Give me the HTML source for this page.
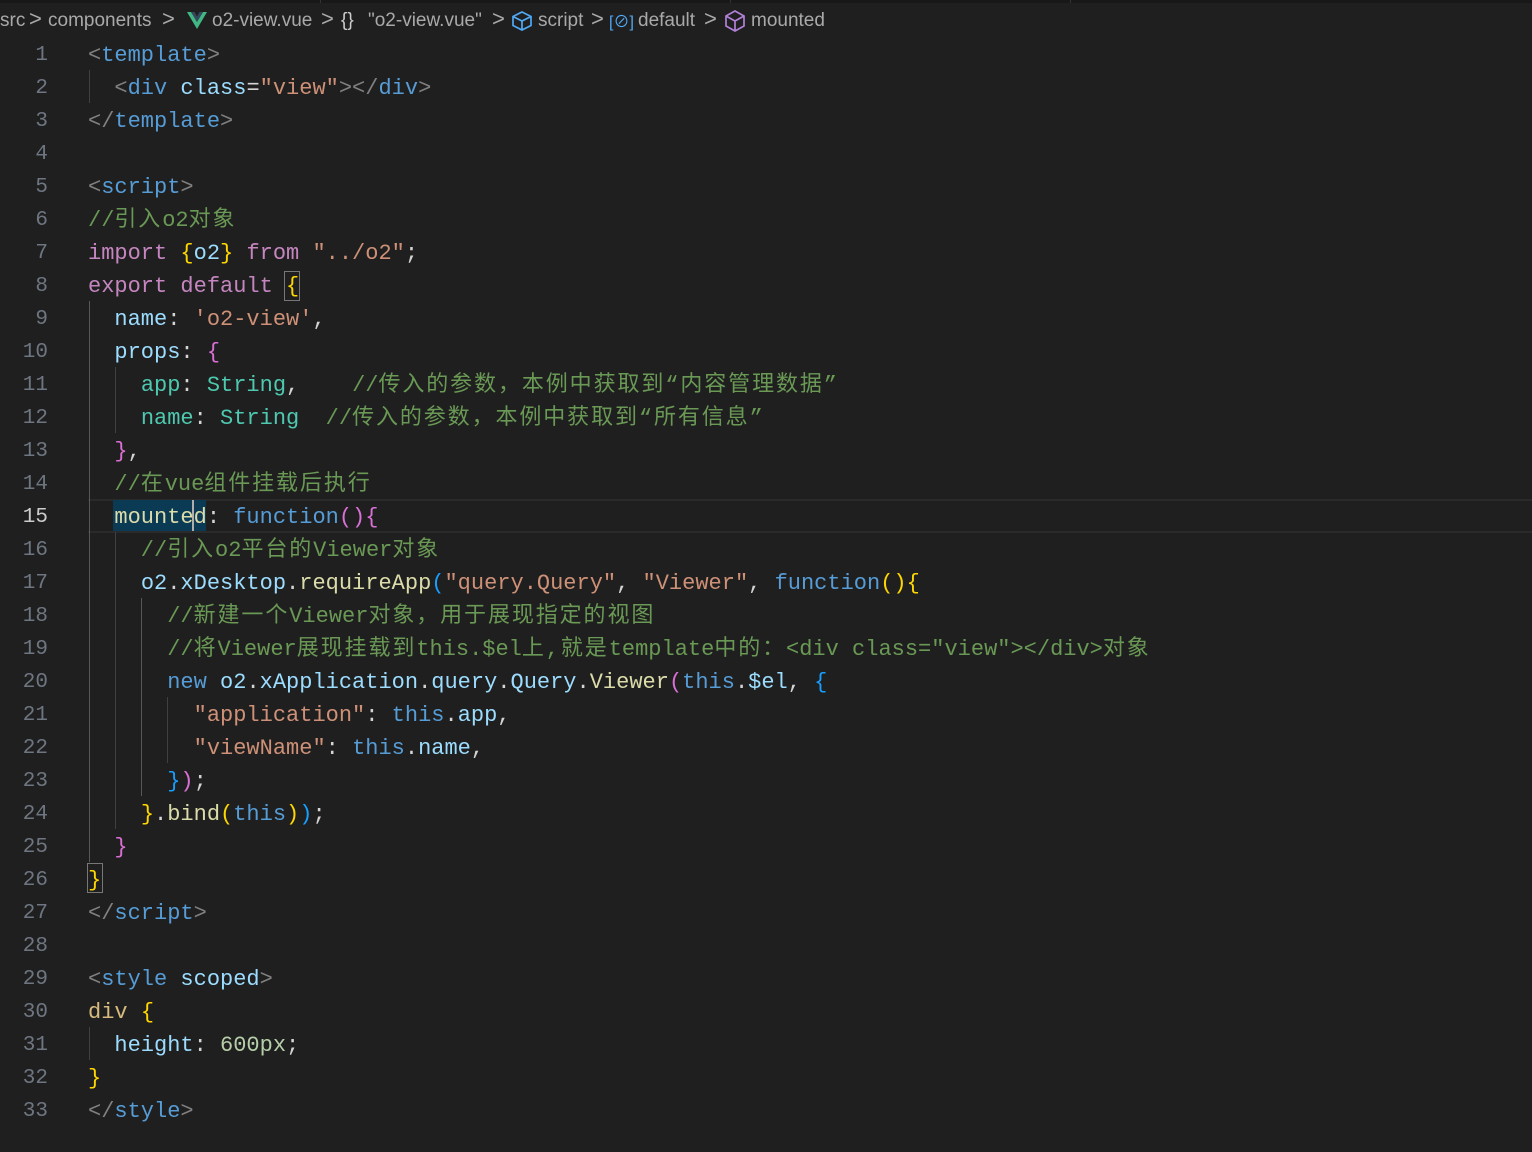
<!DOCTYPE html>
<html><head><meta charset="utf-8"><style>
body{margin:0;width:1532px;height:1152px;background:#1f1f1f;overflow:hidden;position:relative;font-family:"Liberation Mono","Noto Sans CJK SC",monospace;}
.top{position:absolute;left:0;top:0;width:1532px;height:3px;background:#181818}
.bc{position:absolute;top:8px;font-family:"Liberation Sans","Noto Sans CJK SC",sans-serif;font-size:19px;color:#a9a9a9;white-space:pre;line-height:26px}
.ch{font-size:22px;color:#a9a9a9;top:6px}
.ln{position:absolute;left:0;width:48px;text-align:right;font-size:21px;color:#6e7681;line-height:33px;height:33px}
.cl{position:absolute;left:88px;font-size:22px;line-height:33px;height:33px;white-space:pre;color:#d4d4d4}
i{font-style:normal;letter-spacing:1.9px}
.g{position:absolute;width:1px;background:#404040}
.w{position:absolute;left:0;top:2px;width:1532px;height:1150px}
.t{color:#808080}.n{color:#569cd6}.a{color:#9cdcfe}.s{color:#ce9178}.c{color:#6a9955}.k{color:#c586c0}.f{color:#dcdcaa}.y{color:#4ec9b0}.G{color:#ffd700}.P{color:#da70d6}.B{color:#179fff}.d{color:#d7ba7d}.u{color:#b5cea8}
</style></head><body>
<div class="top"></div>
<div style="position:absolute;left:320px;top:0;width:1px;height:3px;background:#333"></div>
<div style="position:absolute;left:730px;top:0;width:1px;height:3px;background:#333"></div>
<div style="position:absolute;left:1070px;top:0;width:1px;height:3px;background:#333"></div>
<div class="bc" style="left:0">src</div>
<div class="bc ch" style="left:29px">&gt;</div>
<div class="bc" style="left:48px">components</div>
<div class="bc ch" style="left:162px">&gt;</div>
<svg style="position:absolute;left:187px;top:12px" width="20" height="18" viewBox="0 0 20 18"><path d="M0 0 L10 17 L20 0 L16 0 L10 10 L4 0Z" fill="#41b883"/><path d="M4 0 L10 10 L16 0 L12.5 0 L10 4.5 L7.5 0Z" fill="#35495e"/></svg>
<div class="bc" style="left:212px">o2-view.vue</div>
<div class="bc ch" style="left:321px">&gt;</div>
<div class="bc" style="left:341px;color:#ccc">{}</div>
<div class="bc" style="left:368px">"o2-view.vue"</div>
<div class="bc ch" style="left:492px">&gt;</div>
<svg style="position:absolute;left:511px;top:10px" width="22" height="22" viewBox="0 0 22 22" fill="none" stroke="#4fa9f5" stroke-width="1.7"><path d="M11 2 L20 6.5 L20 15.5 L11 20 L2 15.5 L2 6.5Z M2 6.5 L11 11 L20 6.5 M11 11 L11 20"/></svg>
<div class="bc" style="left:538px">script</div>
<div class="bc ch" style="left:591px">&gt;</div>
<div class="bc" style="left:609px;color:#4fa9f5;font-size:16px;top:10px">[⊘]</div>
<div class="bc" style="left:638px">default</div>
<div class="bc ch" style="left:704px">&gt;</div>
<svg style="position:absolute;left:724px;top:9px" width="22" height="24" viewBox="0 0 22 24" fill="none" stroke="#b180d7" stroke-width="1.7"><path d="M11 2 L20 7 L20 17 L11 22 L2 17 L2 7Z M2 7 L11 12 L20 7 M11 12 L11 22"/></svg>
<div class="bc" style="left:751px">mounted</div>

<!-- current line -->
<div style="position:absolute;left:88px;top:499px;width:1444px;height:30px;border-top:2px solid #2a2a2a;border-bottom:2px solid #2a2a2a"></div>
<div style="position:absolute;left:113px;top:500px;width:93px;height:31px;background:#0b3a55"></div>
<div style="position:absolute;left:192px;top:500px;width:2px;height:31px;background:#aeafad"></div>
<div style="position:absolute;left:284px;top:271px;width:14px;height:28px;border:1px solid #777"></div>
<div style="position:absolute;left:87px;top:863px;width:14px;height:28px;border:1px solid #777"></div>

<!-- guides -->
<div class="g" style="left:89px;top:70px;height:33px"></div>
<div class="g" style="left:89px;top:301px;height:561px;background:#585858"></div>
<div class="g" style="left:115px;top:367px;height:66px"></div>
<div class="g" style="left:115px;top:532px;height:297px"></div>
<div class="g" style="left:141px;top:598px;height:198px;background:#585858"></div>
<div class="g" style="left:167px;top:697px;height:66px"></div>
<div class="g" style="left:89px;top:1027px;height:33px"></div>

<div class="w">
<div class="ln" style="top:37px">1</div><div class="cl" style="top:37px"><span class="t">&lt;</span><span class="n">template</span><span class="t">&gt;</span></div>
<div class="ln" style="top:70px">2</div><div class="cl" style="top:70px">  <span class="t">&lt;</span><span class="n">div</span> <span class="a">class</span>=<span class="s">"view"</span><span class="t">&gt;&lt;/</span><span class="n">div</span><span class="t">&gt;</span></div>
<div class="ln" style="top:103px">3</div><div class="cl" style="top:103px"><span class="t">&lt;/</span><span class="n">template</span><span class="t">&gt;</span></div>
<div class="ln" style="top:136px">4</div>
<div class="ln" style="top:169px">5</div><div class="cl" style="top:169px"><span class="t">&lt;</span><span class="n">script</span><span class="t">&gt;</span></div>
<div class="ln" style="top:202px">6</div><div class="cl c" style="top:202px">//<i>引入</i>o2<i>对象</i></div>
<div class="ln" style="top:235px">7</div><div class="cl" style="top:235px"><span class="k">import</span> <span class="G">{</span><span class="a">o2</span><span class="G">}</span> <span class="k">from</span> <span class="s">"../o2"</span>;</div>
<div class="ln" style="top:268px">8</div><div class="cl" style="top:268px"><span class="k">export</span> <span class="k">default</span> <span class="G">{</span></div>
<div class="ln" style="top:301px">9</div><div class="cl" style="top:301px">  <span class="a">name</span>: <span class="s">'o2-view'</span>,</div>
<div class="ln" style="top:334px">10</div><div class="cl" style="top:334px">  <span class="a">props</span>: <span class="P">{</span></div>
<div class="ln" style="top:367px">11</div><div class="cl" style="top:367px">    <span class="y">app</span>: <span class="y">String</span>,    <span class="c">//<i>传入的参数，本例中获取到“内容管理数据”</i></span></div>
<div class="ln" style="top:400px">12</div><div class="cl" style="top:400px">    <span class="y">name</span>: <span class="y">String</span>  <span class="c">//<i>传入的参数，本例中获取到“所有信息”</i></span></div>
<div class="ln" style="top:433px">13</div><div class="cl" style="top:433px">  <span class="P">}</span>,</div>
<div class="ln" style="top:466px">14</div><div class="cl c" style="top:466px">  //<i>在</i>vue<i>组件挂载后执行</i></div>
<div class="ln" style="top:499px;color:#ccc">15</div><div class="cl" style="top:499px">  <span class="f">mounted</span>: <span class="n">function</span><span class="P">(){</span></div>
<div class="ln" style="top:532px">16</div><div class="cl c" style="top:532px">    //<i>引入</i>o2<i>平台的</i>Viewer<i>对象</i></div>
<div class="ln" style="top:565px">17</div><div class="cl" style="top:565px">    <span class="a">o2</span>.<span class="a">xDesktop</span>.<span class="f">requireApp</span><span class="B">(</span><span class="s">"query.Query"</span>, <span class="s">"Viewer"</span>, <span class="n">function</span><span class="G">(){</span></div>
<div class="ln" style="top:598px">18</div><div class="cl c" style="top:598px">      //<i>新建一个</i>Viewer<i>对象，用于展现指定的视图</i></div>
<div class="ln" style="top:631px">19</div><div class="cl c" style="top:631px">      //<i>将</i>Viewer<i>展现挂载到</i>this.$el<i>上,就是</i>template<i>中的：</i>&lt;div class="view"&gt;&lt;/div&gt;<i>对象</i></div>
<div class="ln" style="top:664px">20</div><div class="cl" style="top:664px">      <span class="n">new</span> <span class="a">o2</span>.<span class="a">xApplication</span>.<span class="a">query</span>.<span class="a">Query</span>.<span class="f">Viewer</span><span class="P">(</span><span class="n">this</span>.<span class="a">$el</span>, <span class="B">{</span></div>
<div class="ln" style="top:697px">21</div><div class="cl" style="top:697px">        <span class="s">"application"</span>: <span class="n">this</span>.<span class="a">app</span>,</div>
<div class="ln" style="top:730px">22</div><div class="cl" style="top:730px">        <span class="s">"viewName"</span>: <span class="n">this</span>.<span class="a">name</span>,</div>
<div class="ln" style="top:763px">23</div><div class="cl" style="top:763px">      <span class="B">}</span><span class="P">)</span>;</div>
<div class="ln" style="top:796px">24</div><div class="cl" style="top:796px">    <span class="G">}</span>.<span class="f">bind</span><span class="G">(</span><span class="n">this</span><span class="G">)</span><span class="B">)</span>;</div>
<div class="ln" style="top:829px">25</div><div class="cl" style="top:829px">  <span class="P">}</span></div>
<div class="ln" style="top:862px">26</div><div class="cl" style="top:862px"><span class="G">}</span></div>
<div class="ln" style="top:895px">27</div><div class="cl" style="top:895px"><span class="t">&lt;/</span><span class="n">script</span><span class="t">&gt;</span></div>
<div class="ln" style="top:928px">28</div>
<div class="ln" style="top:961px">29</div><div class="cl" style="top:961px"><span class="t">&lt;</span><span class="n">style</span> <span class="a">scoped</span><span class="t">&gt;</span></div>
<div class="ln" style="top:994px">30</div><div class="cl" style="top:994px"><span class="d">div</span> <span class="G">{</span></div>
<div class="ln" style="top:1027px">31</div><div class="cl" style="top:1027px">  <span class="a">height</span>: <span class="u">600px</span>;</div>
<div class="ln" style="top:1060px">32</div><div class="cl" style="top:1060px"><span class="G">}</span></div>
<div class="ln" style="top:1093px">33</div><div class="cl" style="top:1093px"><span class="t">&lt;/</span><span class="n">style</span><span class="t">&gt;</span></div>
</div>
</body></html>
